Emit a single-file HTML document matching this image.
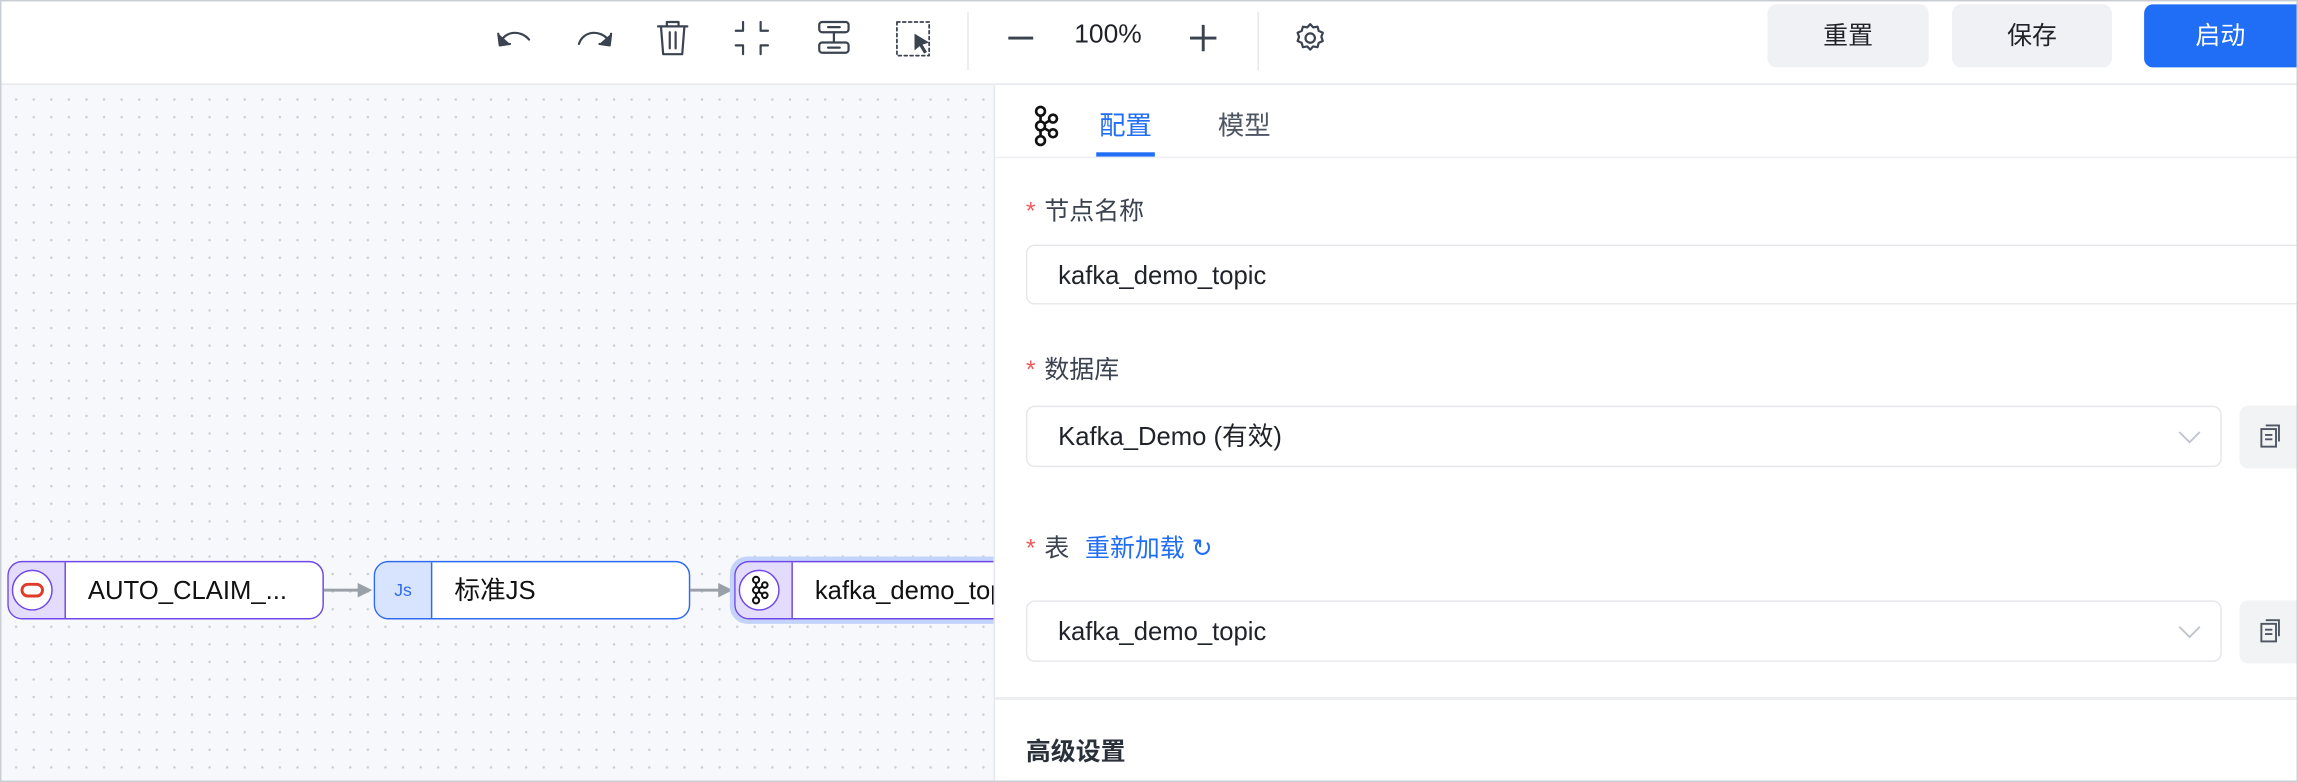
<!DOCTYPE html>
<html><head><meta charset="utf-8"><style>
html,body{margin:0;padding:0;width:2298px;height:782px;overflow:hidden;background:#fff}
#w{position:absolute;left:0;top:0;width:1568px;height:534px;transform:scale(1.46556,1.4644);transform-origin:0 0;font-family:"Liberation Sans","Noto Sans CJK SC",sans-serif;color:#1f2329;background:#fff}
.a{position:absolute}
.frame{left:0;top:0;width:1566px;height:532px;border:1px solid #c9cdd4;box-sizing:content-box}
.canvas{left:1px;top:58px;width:677px;height:475px;background-color:#f6f8fc;background-image:radial-gradient(circle,#c8cdd6 0.7px,transparent 1px);background-size:12px 12px;background-position:4px 4px;overflow:hidden}
.tb{left:1px;top:0;width:1566px;height:57px;border-bottom:1px solid #e4e7ec;background:#fff}
.ic{stroke:#3b4350;fill:none;stroke-width:1.5;stroke-linecap:round;stroke-linejoin:round}
.btn{top:3px;height:43px;border-radius:6px;font-size:17px;line-height:43px;text-align:center}
.panel{left:678px;top:58px;width:889px;height:475px;border-left:1px solid #e4e7ec;background:#fff}
.lbl{font-size:17px;color:#3b4350}
.star{color:#f05a5a;margin-right:6px}
.inp{border:1px solid #e5e7eb;border-radius:6px;height:41px;box-sizing:border-box;font-size:17.5px;line-height:40px;padding-left:21px;color:#1f2329;background:#fff}
.cp{width:40px;height:43px;background:#f2f3f5;border-radius:6px 0 0 6px}
.node{height:40px;top:325px;border-radius:10px;background:#fff;box-sizing:border-box;overflow:hidden}
.node .l{position:absolute;left:0;top:0;width:38px;height:100%}
.node .t{position:absolute;left:54px;top:0;line-height:38px;font-size:17.5px;color:#111;white-space:nowrap}
</style></head><body><div id="w">
<div class="a canvas">
<div class="a node" style="left:4px;width:216px;border:1.5px solid #7048e8">
 <div class="l" style="background:#e3dcfc;border-right:1.5px solid #7048e8"></div>
 <div class="t">AUTO_CLAIM_...</div></div>
<div class="a" style="left:7px;top:331px;width:28px;height:28px;border-radius:50%;background:#fff;border:1.3px solid #7048e8;box-sizing:border-box"></div>
<div class="a" style="left:13px;top:340px;width:16px;height:10px;border-radius:5px;border:2.5px solid #e03a2b;box-sizing:border-box"></div>
<div class="a" style="left:220px;top:344px;width:26px;height:2px;background:#9aa0a8"></div>
<svg class="a" style="left:243px;top:340px" width="11" height="10"><path d="M0 0 L10 5 L0 10z" fill="#9aa0a8"/></svg>
<div class="a node" style="left:254px;width:216px;border:1.5px solid #2f6bf0">
 <div class="l" style="background:#d8e3fd;border-right:1.5px solid #2f6bf0;color:#2f6bf0;font-size:12px;line-height:38px;text-align:center">Js</div>
 <div class="t">标准JS</div></div>
<div class="a" style="left:470px;top:344px;width:22px;height:2px;background:#9aa0a8"></div>
<svg class="a" style="left:489px;top:340px" width="11" height="10"><path d="M0 0 L10 5 L0 10z" fill="#9aa0a8"/></svg>
<div class="a" style="left:497px;top:322px;width:200px;height:46px;border-radius:12px;background:#c3d3fb"></div>
<div class="a node" style="left:500px;width:200px;border:1.5px solid #7048e8">
 <div class="l" style="background:#e3dcfc;border-right:1.5px solid #7048e8"></div>
 <div class="t">kafka_demo_topic</div></div>
<div class="a" style="left:503px;top:331px;width:28px;height:28px;border-radius:50%;background:#fff;border:1.3px solid #7048e8;box-sizing:border-box"></div>
<svg class="a" style="left:510px;top:335px" width="14" height="20" viewBox="0 0 20 28"><g fill="none" stroke="#111" stroke-width="2"><circle cx="7" cy="4" r="3"/><circle cx="7" cy="14" r="3"/><circle cx="7" cy="24" r="3"/><circle cx="15.5" cy="9" r="2.7"/><circle cx="15.5" cy="19" r="2.7"/><path d="M7 7v4M7 17v4M9.5 12.5l3.7-2.2M9.5 15.5l3.7 2.2"/></g></svg>
</div>
<div class="a tb"></div>
<!-- toolbar icons -->
<svg class="a" style="left:335px;top:10px" width="320" height="32" viewBox="0 0 320 32">
 <g class="ic">
  <path d="M6 20 C9 11 20 10 26 17"/><path d="M5 13 L6 21 L13 20" fill="#3b4350"/>
  <path d="M82 17 C76 10 65 11 62 20" transform="translate(-2,0)"/><path d="M82 13 L81 21 L74 20" fill="#3b4350"/>
  <path d="M114 8 h20 M120 8 v-3 h8 v3 M116 8 l1.5 19 h13 l1.5 -19 M122 12 v11 M126 12 v11"/>
  <path d="M172 5 v6 h-5 M184 5 v6 h5 M172 27 v-6 h-5 M184 27 v-6 h5"/>
  <rect x="224" y="5" width="20" height="7" rx="2"/><rect x="224" y="19" width="20" height="7" rx="2"/><path d="M230 8.5 h8 M230 22.5 h8 M234 12 v7"/>
  <rect x="277" y="5" width="22" height="23" stroke-dasharray="2 2" stroke-width="1.2"/>
 </g>
 <path d="M289 13 l10 6 -4.5 1.5 3 5 -2 1 -3-5 -3.5 3z" fill="#3b4350"/>
</svg>
<div class="a" style="left:660px;top:8px;width:1px;height:40px;background:#e4e7ec"></div>
<div class="a" style="left:688px;top:25px;width:17px;height:1.5px;background:#3b4350"></div>
<div class="a" style="left:733px;top:13px;font-size:18px;color:#1f2329">100%</div>
<div class="a" style="left:812px;top:25px;width:18px;height:1.5px;background:#3b4350"></div>
<div class="a" style="left:820px;top:17px;width:1.5px;height:18px;background:#3b4350"></div>
<div class="a" style="left:858px;top:8px;width:1px;height:40px;background:#e4e7ec"></div>
<svg class="a" style="left:882px;top:14px" width="24" height="24" viewBox="0 0 24 24"><g class="ic" stroke-width="1.4"><path d="M12 2.5 l2 2.2 3-.5 .8 2.9 2.8 1.3 -1 2.8 1 2.8 -2.8 1.3 -.8 2.9 -3 -.5 -2 2.2 -2-2.2 -3 .5 -.8-2.9 -2.8-1.3 1-2.8 -1-2.8 2.8-1.3 .8-2.9 3 .5z"/><circle cx="12" cy="12" r="3.2"/></g></svg>
<div class="a btn" style="left:1206px;width:110px;background:#f0f1f4;color:#1f2329">重置</div>
<div class="a btn" style="left:1332px;width:109px;background:#f0f1f4;color:#1f2329">保存</div>
<div class="a btn" style="left:1463px;width:104px;background:#1f6ef5;color:#fff;border-radius:6px 0 0 6px">启动</div>
<!-- panel -->
<div class="a panel"></div>
<svg class="a" style="left:703px;top:72px" width="20" height="28" viewBox="0 0 20 28"><g fill="none" stroke="#111" stroke-width="1.8"><circle cx="7" cy="4" r="3"/><circle cx="7" cy="14" r="3"/><circle cx="7" cy="24" r="3"/><circle cx="15.5" cy="9" r="2.7"/><circle cx="15.5" cy="19" r="2.7"/><path d="M7 7v4M7 17v4M9.5 12.5l3.7-2.2M9.5 15.5l3.7 2.2"/></g></svg>
<div class="a" style="left:750px;top:72px;font-size:18px;color:#1f6ef5">配置</div>
<div class="a" style="left:748px;top:104px;width:40px;height:3px;background:#1f6ef5"></div>
<div class="a" style="left:831px;top:72px;font-size:18px;color:#4e5663">模型</div>
<div class="a" style="left:679px;top:107px;width:888px;height:1px;background:#eceef2"></div>
<div class="a lbl" style="left:700px;top:130px"><span class="star">*</span>节点名称</div>
<div class="a inp" style="left:700px;top:167px;width:868px;border-right:none;border-radius:6px 0 0 6px">kafka_demo_topic</div>
<div class="a lbl" style="left:700px;top:238px"><span class="star">*</span>数据库</div>
<div class="a inp" style="left:700px;top:277px;width:816px;height:42px">Kafka_Demo (有效)</div>
<svg class="a" style="left:1486px;top:292px" width="16" height="12"><path d="M1 3 l7 7 7-7" fill="none" stroke="#c0c4cc" stroke-width="1.3"/></svg>
<div class="a cp" style="left:1528px;top:277px"></div>
<svg class="a" style="left:1540px;top:288px" width="20" height="20" viewBox="0 0 20 20"><g fill="none" stroke="#4e5663" stroke-width="1.3"><rect x="3" y="5" width="10" height="12"/><path d="M6 2.5 h9 v11"/><path d="M5.5 9h5M5.5 12h5"/></g></svg>
<div class="a lbl" style="left:700px;top:360px"><span class="star">*</span>表 <span style="color:#1f6ef5;margin-left:6px">重新加载 ↻</span></div>
<div class="a inp" style="left:700px;top:410px;width:816px;height:42px">kafka_demo_topic</div>
<svg class="a" style="left:1486px;top:425px" width="16" height="12"><path d="M1 3 l7 7 7-7" fill="none" stroke="#c0c4cc" stroke-width="1.3"/></svg>
<div class="a cp" style="left:1528px;top:410px"></div>
<svg class="a" style="left:1540px;top:421px" width="20" height="20" viewBox="0 0 20 20"><g fill="none" stroke="#4e5663" stroke-width="1.3"><rect x="3" y="5" width="10" height="12"/><path d="M6 2.5 h9 v11"/><path d="M5.5 9h5M5.5 12h5"/></g></svg>
<div class="a" style="left:679px;top:476px;width:888px;height:1.5px;background:#eceef2"></div>
<div class="a" style="left:700px;top:499px;font-size:17px;font-weight:bold;color:#2b313b">高级设置</div>
<div class="a frame" style="background:transparent"></div>
</div></body></html>
